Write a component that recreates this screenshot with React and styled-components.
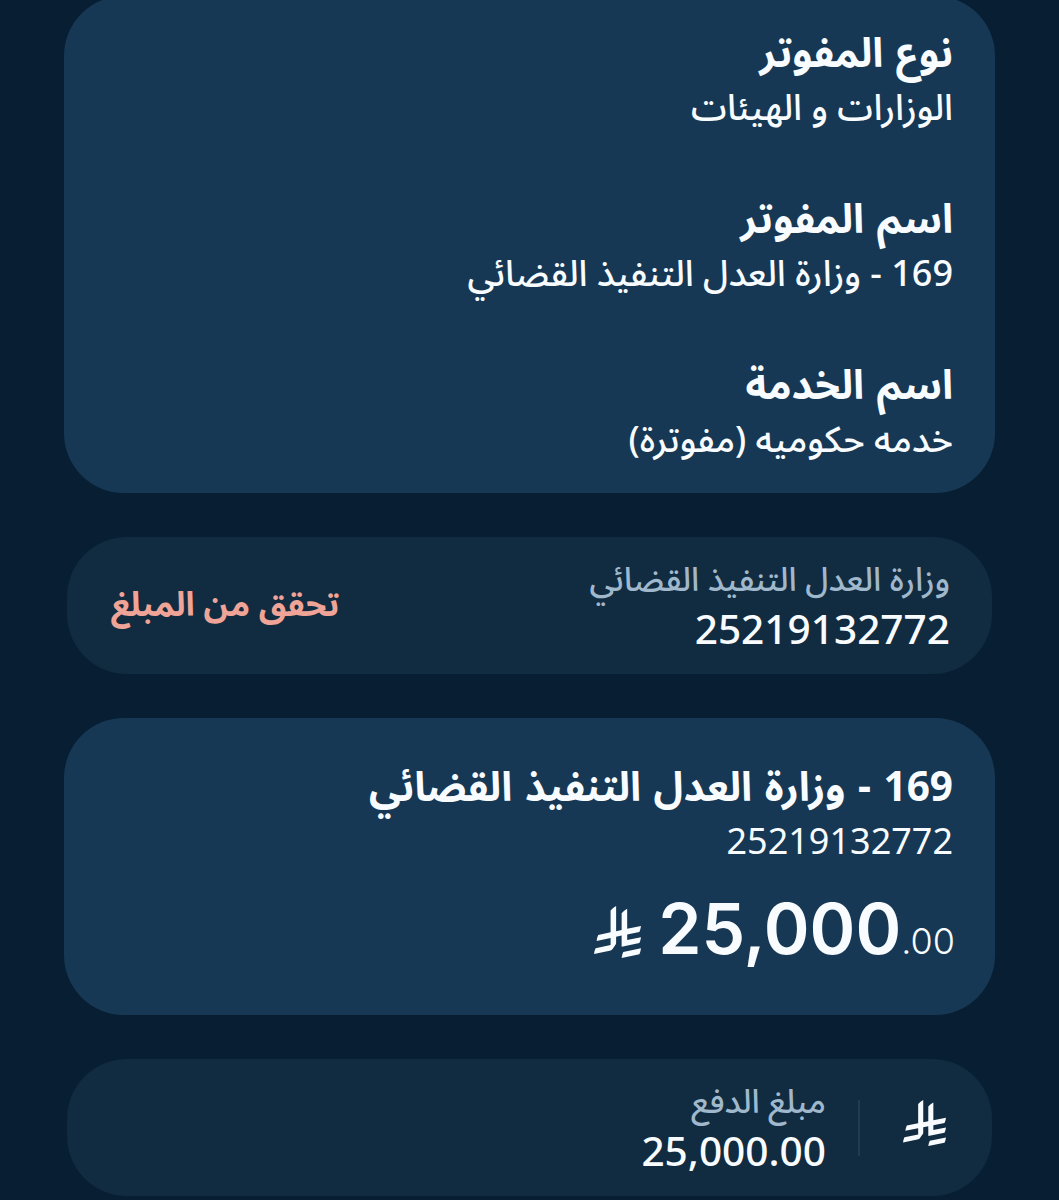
import React from "react";
import styled, { createGlobalStyle } from "styled-components";

const details = [
  { title: "نوع المفوتر", value: "الوزارات و الهيئات" },
  { title: "اسم المفوتر", value: "169 - وزارة العدل التنفيذ القضائي" },
  { title: "اسم الخدمة", value: "خدمه حكوميه (مفوترة)" },
];

function RiyalIcon({ width, height }) {
  return (
    <svg width={width} height={height} viewBox="0 0 1124.14 1256.39" preserveAspectRatio="none" fill="currentColor">
      <path d="M699.62,1113.02h0c-20.06,44.48-33.32,92.75-38.4,143.37l424.51-90.24c20.06-44.47,33.31-92.75,38.4-143.37l-424.51,90.24Z" />
      <path d="M1085.73,895.8c20.06-44.47,33.32-92.75,38.4-143.37l-330.68,70.33v-135.2l292.27-62.11c20.06-44.47,33.32-92.75,38.4-143.37l-330.68,70.27V66.13c-50.67,28.45-95.67,66.32-132.25,110.99v403.35l-132.25,28.11V0c-50.67,28.44-95.67,66.32-132.25,110.99v525.69l-295.91,62.88c-20.06,44.47-33.33,92.75-38.42,143.37l334.33-71.05v170.26l-358.3,76.14c-20.06,44.47-33.32,92.75-38.4,143.37l375.04-79.7c30.53-6.35,56.77-24.4,73.83-49.24l68.78-101.97v-.02c7.14-10.55,11.3-23.27,11.3-36.97v-149.98l132.25-28.11v270.4l424.53-90.28Z" />
    </svg>
  );
}

function App() {
  return (
    <Page dir="rtl">
      <GlobalStyle />
      <DetailsCard>
        {details.map((item) => (
          <Detail key={item.title}>
            <Title>{item.title}</Title>
            <Value>{item.value}</Value>
          </Detail>
        ))}
      </DetailsCard>

      <AccountCard>
        <Field>
          <Label>وزارة العدل التنفيذ القضائي</Label>
          <Number>25219132772</Number>
        </Field>
        <VerifyBtn>تحقق من المبلغ</VerifyBtn>
      </AccountCard>

      <BillCard>
        <Title>169 - وزارة العدل التنفيذ القضائي</Title>
        <Value $weight={400}>25219132772</Value>
        <Amount dir="ltr">
          <RiyalIcon width={47} height={52} />
          <Whole>25,000</Whole>
          <Fraction>.00</Fraction>
        </Amount>
      </BillCard>

      <PayCard>
        <RiyalIcon width={43} height={46} />
        <Divider />
        <Field>
          <Label>مبلغ الدفع</Label>
          <Number>25,000.00</Number>
        </Field>
      </PayCard>
    </Page>
  );
}

export default App;

const GlobalStyle = createGlobalStyle`
  body {
    margin: 0;
    background: #081f33;
    overflow: hidden;
  }
`;

const Page = styled.div`
  box-sizing: border-box;
  width: 1059px;
  height: 1200px;
  overflow: hidden;
  display: flex;
  flex-direction: column;
  align-items: center;
  color: #f8fcff;
  background: #081f33;
  font-family: "Noto Sans", "Noto Sans Arabic", "DejaVu Sans", sans-serif;
  white-space: nowrap;
`;

const Card = styled.section`
  box-sizing: border-box;
  flex-shrink: 0;
  width: 931px;
  padding: 0 42px;
  border-radius: 60px;
  background: #173854;
`;

const DetailsCard = styled(Card)`
  height: 497px;
  margin-top: -4px;
  padding-top: 28px;
  display: flex;
  flex-direction: column;
  gap: 56px;
`;

const Detail = styled.div`
  height: 110px;
`;

const Title = styled.h2`
  margin: 0;
  height: 56px;
  line-height: 55px;
  font-size: 40.5px;
  font-weight: 700;
  word-spacing: 2px;
`;

const Value = styled.p`
  margin: 0;
  height: 54px;
  line-height: 54px;
  font-size: 36px;
  font-weight: ${(p) => p.$weight || 500};
`;

const BillCard = styled(Card)`
  height: 297px;
  margin-top: 44px;
  padding-top: 40px;
`;

const Amount = styled.div`
  display: flex;
  justify-content: flex-end;
  align-items: baseline;
  margin: 21px -2px 0 0;
  font-family: Inter, "Noto Sans", sans-serif;

  svg {
    margin-right: 17px;
    transform: translateY(4px);
  }
`;

const Whole = styled.span`
  font-size: 69.5px;
  line-height: 80px;
  font-weight: 600;
`;

const Fraction = styled.span`
  font-size: 36px;
  font-weight: 300;
`;

const MutedCard = styled(Card)`
  display: flex;
  align-items: center;
  width: 925px;
  height: 137px;
  margin-top: 44px;
  padding-bottom: 3px;
  background: #112b40;
`;

const AccountCard = styled(MutedCard)`
  justify-content: space-between;
`;

const PayCard = styled(MutedCard)`
  padding-right: 46px;
  padding-bottom: 3px;

  svg {
    margin-bottom: 7px;
  }
`;

const Field = styled.div`
  display: flex;
  flex-direction: column;
`;

const Label = styled.span`
  height: 50px;
  line-height: 50px;
  font-size: 33px;
  font-weight: 500;
  color: #a0b8cc;
`;

const Number = styled.span`
  height: 50px;
  line-height: 49px;
  font-size: 40.6px;
  font-weight: 500;
`;

const VerifyBtn = styled.button`
  padding: 3px 0 0 2px;
  border: 0;
  background: none;
  color: #efa497;
  font-family: inherit;
  font-size: 33.6px;
  font-weight: 700;
`;

const Divider = styled.div`
  width: 2px;
  height: 56px;
  margin: 3px 43px 0 32px;
  background: #213b50;
`;
